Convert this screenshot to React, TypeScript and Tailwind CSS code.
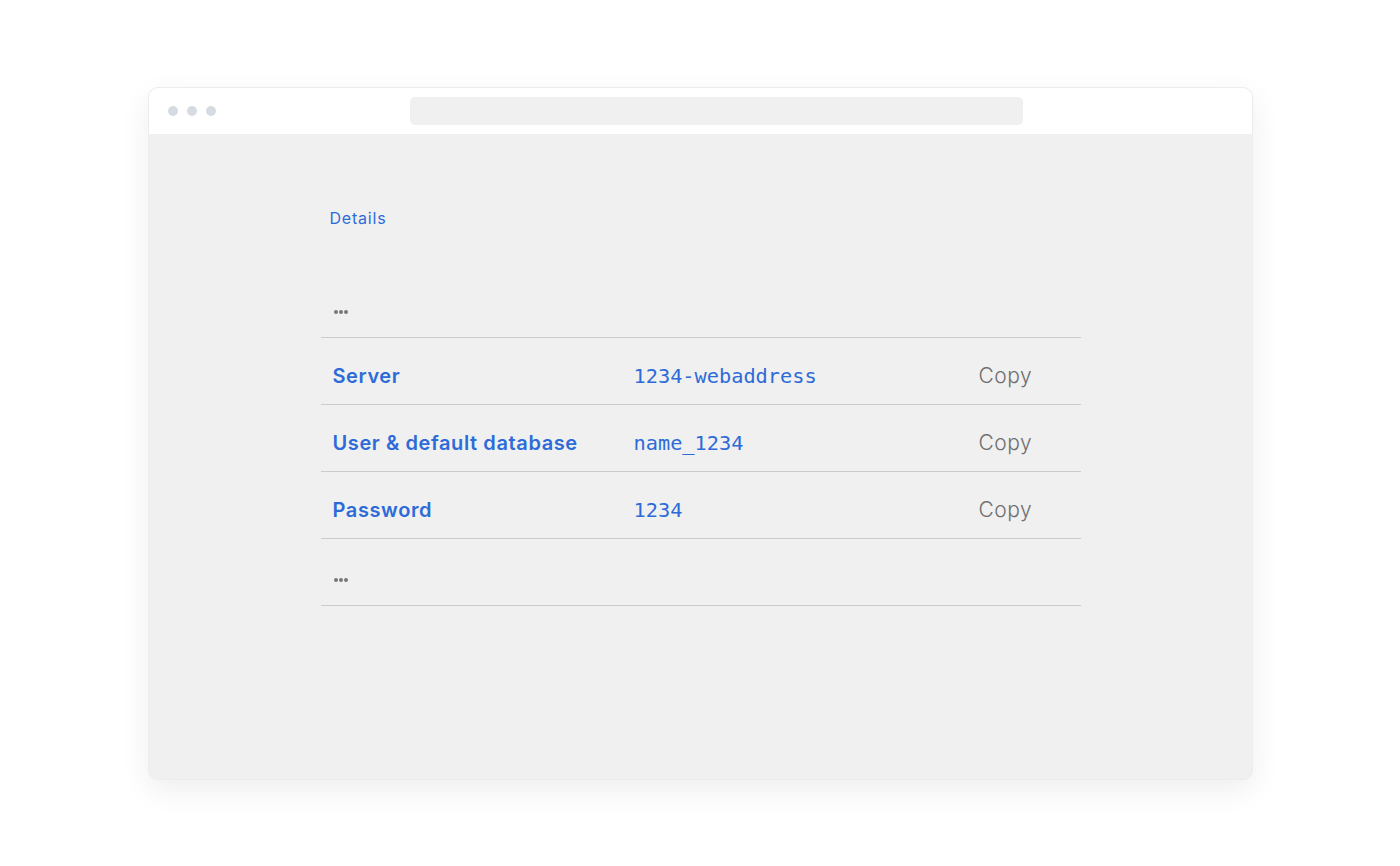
import React from 'react';

const rows = [
  { label: 'Server', value: '1234-webaddress' },
  { label: 'User & default database', value: 'name_1234' },
  { label: 'Password', value: '1234' },
];

const sans = "font-['Inter','Noto_Sans',sans-serif]";

function Ellipsis() {
  return (
    <div className="flex h-[67px] items-end border-b border-[#c9cccf] pb-[23px] pl-[13px]">
      <span className="flex gap-[1px]">
        <span className="h-[4px] w-[4px] rounded-full bg-[#777]" />
        <span className="h-[4px] w-[4px] rounded-full bg-[#777]" />
        <span className="h-[4px] w-[4px] rounded-full bg-[#777]" />
      </span>
    </div>
  );
}

export default function App() {
  return (
    <main className={`min-h-screen w-full bg-white pt-[87px] ${sans}`}>
      <div className="mx-auto flex h-[693px] w-[1105px] flex-col overflow-hidden rounded-[10px] border border-[#ececec] bg-[#f0f0f0] shadow-[0_10px_30px_rgba(0,0,0,0.07)]">
        {/* window chrome */}
        <div className="flex h-[46px] items-center bg-white">
          <div className="flex gap-[9px] pl-[19px]">
            <span className="h-[10px] w-[10px] rounded-full bg-[#d5dbe1]" />
            <span className="h-[10px] w-[10px] rounded-full bg-[#d5dbe1]" />
            <span className="h-[10px] w-[10px] rounded-full bg-[#d5dbe1]" />
          </div>
          <div className="ml-[194px] h-[28px] w-[613px] rounded-[5px] bg-[#f0f0f0]" />
        </div>

        {/* page */}
        <div className="flex flex-col pl-[172px]">
          <div className="mt-[74px] pl-[9px] text-[16px] leading-[20px] tracking-[0.8px] text-[#2d6bd8]">Details</div>

          <div className="mt-[43px] w-[760px]">
            <Ellipsis />
            {rows.map(r => (
              <div key={r.label} className="flex h-[67px] items-center border-b border-[#c9cccf] pt-[10px]">
                <div className="w-[313px] pl-[12px] text-[20px] font-semibold tracking-[0.6px] text-[#2d6bd8]">{r.label}</div>
                <div className="w-[345px] font-['DejaVu_Sans_Mono',monospace] text-[20.3px] text-[#2d6bd8]">{r.value}</div>
                <div className="text-[21px] font-light tracking-[0.5px] text-[#6f6f6f]">Copy</div>
              </div>
            ))}
            <Ellipsis />
          </div>
        </div>
      </div>
    </main>
  );
}
